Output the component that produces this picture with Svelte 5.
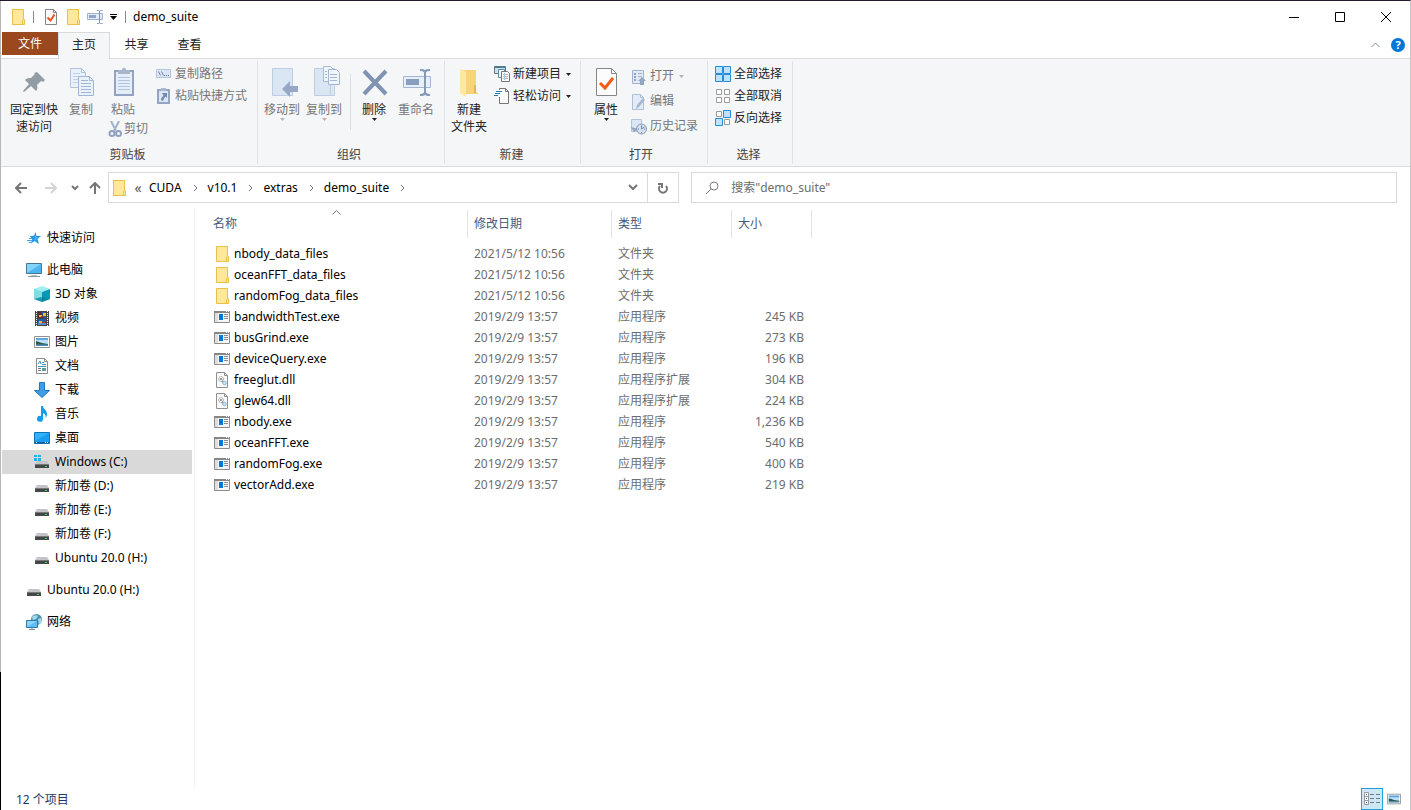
<script lang="ts">
  type Place = { name: string; icon: string; active?: boolean };
  type Entry = { name: string; icon: string; date: string; type: string; size?: string };

  const tabs = ['主页', '共享', '查看'];
  const crumbs = ['CUDA', 'v10.1', 'extras', 'demo_suite'];

  const places: { root: Place; children: Place[] }[] = [
    { root: { name: '快速访问', icon: 'star' }, children: [] },
    {
      root: { name: '此电脑', icon: 'pc' },
      children: [
        { name: '3D 对象', icon: 'cube' },
        { name: '视频', icon: 'video' },
        { name: '图片', icon: 'picture' },
        { name: '文档', icon: 'document' },
        { name: '下载', icon: 'download' },
        { name: '音乐', icon: 'music' },
        { name: '桌面', icon: 'desktop' },
        { name: 'Windows (C:)', icon: 'winDrive', active: true },
        { name: '新加卷 (D:)', icon: 'drive' },
        { name: '新加卷 (E:)', icon: 'drive' },
        { name: '新加卷 (F:)', icon: 'drive' },
        { name: 'Ubuntu 20.0 (H:)', icon: 'drive' },
      ],
    },
    { root: { name: 'Ubuntu 20.0 (H:)', icon: 'drive' }, children: [] },
    { root: { name: '网络', icon: 'network' }, children: [] },
  ];

  const folder = (name: string): Entry => ({ name, icon: 'folder', date: '2021/5/12 10:56', type: '文件夹' });
  const exe = (name: string, size: string): Entry => ({ name, icon: 'exe', date: '2019/2/9 13:57', type: '应用程序', size });
  const dll = (name: string, size: string): Entry => ({ name, icon: 'dll', date: '2019/2/9 13:57', type: '应用程序扩展', size });

  const files: Entry[] = [
    folder('nbody_data_files'),
    folder('oceanFFT_data_files'),
    folder('randomFog_data_files'),
    exe('bandwidthTest.exe', '245 KB'),
    exe('busGrind.exe', '273 KB'),
    exe('deviceQuery.exe', '196 KB'),
    dll('freeglut.dll', '304 KB'),
    dll('glew64.dll', '224 KB'),
    exe('nbody.exe', '1,236 KB'),
    exe('oceanFFT.exe', '540 KB'),
    exe('randomFog.exe', '400 KB'),
    exe('vectorAdd.exe', '219 KB'),
  ];

  let activeTab = $state('主页');
  let query = $state('');
</script>

{#snippet icon(name: string)}
  <svg class="i16" viewBox="0 0 16 16" aria-hidden="true">
    {#if name === 'folder'}
      <path d="M2 0h12v13h1v3H2z" fill="#ffe79b" />
      <path d="M2.5.5h11v10h1v5h-12z" fill="none" stroke="#e9c04c" />
      <path d="M12.5 11v4" stroke="#e9c04c" />
    {:else if name === 'check'}
      <path d="M2.5.5h8l3 3v12h-11z" fill="#fafafa" stroke="#868686" />
      <path d="M10.5.5v3h3" fill="none" stroke="#868686" />
      <path d="M4.5 8.5l3 3 4-6" fill="none" stroke="#e8541b" stroke-width="2" />
    {:else if name === 'rename'}
      <path d="M.5 4.5h15v6H.5z" fill="#e3ebf6" stroke="#9fb1cf" />
      <path d="M2 6h7v3H2z" fill="#91a4c5" />
      <path d="M10 1.500c1.500 0 2.500 0 2.500 1v11c0 1-1 1-2.500 1M15.500 1.500c-2 0-3 0-3 1v11c0 1 1 1 3 1" fill="none" stroke="#8193b3" />
    {:else if name === 'exe'}
      <path d="M.5 2.500h15v11H.5z" fill="#f6f6f6" stroke="#8a8c8f" />
      <path d="M0 2h16v2H0z" fill="#84878a" />
      <path d="M1 4h3v9H1z" fill="#dedede" />
      <path d="M12 2.500h1M14 2.500h1" stroke="#fff" />
      <path d="M5 5h4v6H5z" fill="#0078d7" />
      <path d="M10 5.500h4M10 7.500h4M10 9.500h4" stroke="#8c8c8c" />
    {:else if name === 'dll'}
      <path d="M2.500.5h8l3 3v12h-11z" fill="#fafafa" stroke="#909090" />
      <path d="M10.500.5v3h3" fill="none" stroke="#909090" />
      <circle cx="7" cy="7" r="2.500" fill="#e8e8e8" stroke="#a0a0a0" stroke-dasharray="1 .6" />
      <circle cx="7" cy="7" r="1" fill="#888" />
      <path d="M8 9l3 3" stroke="#8a9199" stroke-width="2" />
      <circle cx="10.500" cy="11" r="1.800" fill="#cfe8f8" stroke="#8bb8d8" />
    {:else if name === 'star'}
      <path d="M9.500 2l1 4H15l-3.500 3 1.500 5-4.500-3L5 13.500l1.300-4.700L3.500 6l4.500-.2z" fill="#2196e3" />
      <path d="M9.300 4.500l.7 2.500h2.500L10 8.500l.8 2.500-2.300-1.500z" fill="#51bbf5" />
      <path d="M3 8.500h4M1 10.500h5M3 12.500h3" stroke="#4a9fdb" />
    {:else if name === 'pc'}
      <path d="M.5 1.500h15v10H.5z" fill="#4cb5f2" stroke="#457590" />
      <path d="M1 2h14L1 11z" fill="#83d3fa" />
      <path d="M5 13h6v1H5z" fill="#b7c0c8" />
      <path d="M2 14.500h12" stroke="#8599a8" />
    {:else if name === 'cube'}
      <path d="M8 0l8 3-8 3-8-3z" fill="#a0edf2" />
      <path d="M0 3l8 3v10l-8-3z" fill="#3cc4d2" />
      <path d="M16 3L8 6v10l8-3z" fill="#0698b5" />
      <path d="M0 3l8 3v5l-8 2z" fill="#7fdde3" />
      <path d="M8 11l8 2-8 3-8-3z" fill="#087b95" opacity=".6" />
    {:else if name === 'video'}
      <path d="M1 1h14v15H1z" fill="#454545" />
      <path d="M2.500 1v15M13.500 1v15" stroke="#fff" stroke-dasharray="1 1" />
      <path d="M4 2h8v6H4zM4 9h8v6H4z" fill="#285ba8" />
      <path d="M4 2h3l3 6H4z" fill="#5a2c32" />
      <path d="M5 5h3v2H5zM9 3h3v3H9zM5 11h3v2H5z" fill="#f3bd25" />
      <path d="M7 6h3v1H7zM8 12h3v1H8z" fill="#bd3d31" />
      <path d="M4 14h8" stroke="#76c8ef" />
    {:else if name === 'picture'}
      <path d="M.5 2.500h15v11H.5z" fill="#fff" stroke="#909090" />
      <path d="M2 4h12v8H2z" fill="#b7e1f8" />
      <path d="M2 4h12v2H2z" fill="#63a5df" />
      <path d="M2 7l3 1 3 1 6 1v1H2z" fill="#31594b" />
      <path d="M2 10.500h12v1.500H2z" fill="#4d91b8" />
    {:else if name === 'document'}
      <path d="M2.500.5h8l3 3v12h-11z" fill="#fff" stroke="#8a8a8a" />
      <path d="M10.500.5v3h3" fill="none" stroke="#8a8a8a" />
      <path d="M4 6l2-3 1 3M8 4.500h2M8 6.500h4M4 8.500h8" stroke="#3f91c4" fill="none" />
      <path d="M4 10.500h3M4 12.500h3" stroke="#777" />
      <path d="M8 10h4v3H8z" fill="#5c9c9b" />
    {:else if name === 'download'}
      <path d="M5.500.5h5v8h5L8 15.500.5 8.500h5z" fill="#3c9de9" stroke="#2276bb" />
    {:else if name === 'music'}
      <path d="M7 0h2c0 3 4 4 4 8 0 1-.5 3-1.500 4 .5-3-.5-4-2.500-5v6a3 3 0 1 1-2-3z" fill="#139ce9" />
    {:else if name === 'desktop'}
      <path d="M.5 2.500h15v11H.5z" fill="#1a9cf0" stroke="#1073b4" />
      <path d="M1 3h14L1 11z" fill="#35b0fb" />
      <path d="M1 12.500h14" stroke="#075c95" />
      <path d="M2 12.500h1M11 12.500h1M13 12.500h1" stroke="#fff" />
    {:else if name === 'drive' || name === 'winDrive'}
      <path d="M3 7h10l2 3H1z" fill="#c2c5c9" />
      <path d="M1 10h14v4H1z" fill="#454749" />
      <path d="M1 10.500h14" stroke="#77797c" />
      <path d="M11 12h2v1h-2z" fill="#38e34a" />
      {#if name === 'winDrive'}
        <path d="M0 1h3v2H0zM4 1h3v2H4zM0 4h3v3H0zM4 4h3v3H4z" fill="#20b4ee" />
      {/if}
    {:else if name === 'network'}
      <circle cx="10.500" cy="5.500" r="5.500" fill="#4b94b7" />
      <path d="M6 3c2-2 5-2 6-1l-2 3-3 1zM12 5l3-1 1 4-3 2z" fill="#a6d9e6" />
      <path d="M.5 6.500h11v7H.5z" fill="#5bbdf3" stroke="#3279a5" />
      <path d="M1 7h10l-10 6z" fill="#89d4fa" />
      <path d="M3 15.500h6M6 14v1" stroke="#78909f" />
    {:else if name === 'copyPath'}
      <path d="M.5 3.500h14v8H.5z" fill="#dce6f4" stroke="#b4c4dd" />
      <path d="M2.500 5.500l2 4M5.500 5.500l2 4" stroke="#6f84aa" />
      <path d="M8 9.500h1M10 9.500h1M12 9.500h1" stroke="#5d739c" />
    {:else if name === 'pasteLink'}
      <path d="M2 2h11v13H2z" fill="#dbe6f5" stroke="#93a5c3" stroke-width="2" />
      <path d="M5 0h5v3H5z" fill="#aab8cf" />
      <path d="M6 5h5v5L9.500 8.500C8 10 7.500 11 7.500 12.500H5c0-2 1-3.500 2.500-5z" fill="#7288ae" />
    {:else if name === 'cut'}
      <path d="M4 0l5 10M12 0L7 10" stroke="#a4b2ca" stroke-width="2" />
      <circle cx="5" cy="12.500" r="2.500" fill="none" stroke="#8fa2c0" stroke-width="2" />
      <circle cx="11.500" cy="12.500" r="2.500" fill="none" stroke="#8fa2c0" stroke-width="2" />
    {:else if name === 'newItem'}
      <path d="M.5.5h11v7H.5z" fill="#c4e3f3" stroke="#55798c" />
      <path d="M1 1.500h11" stroke="#55798c" />
      <path d="M4.500 3.500h6v8h-6z" fill="#f8fbfd" stroke="#648aa1" />
      <path d="M7.500 5.500h6l2 2v8h-8z" fill="#fff" stroke="#777" />
      <path d="M9 8.500h5M9 10.500h5M9 12.500h5" stroke="#e5a3a3" />
      <path d="M10.500 7v7" stroke="#a6c9ef" />
    {:else if name === 'easyAccess'}
      <path d="M5 .5h6.500l3 3v12H5z" fill="#fafafa" />
      <path d="M5.500 2V.5h6l3 3v12h-9V9" fill="none" stroke="#777" />
      <path d="M11.500.5v3h3" fill="none" stroke="#777" />
      <path d="M2 3.500h6M1 5.500h5M0 7.500h4" stroke="#297cad" />
    {:else if name === 'open'}
      <path d="M1.500 1.500h11v13h-11z" fill="#e1eaf6" stroke="#a0b2d0" />
      <path d="M3 4h2v2H3zM3 7h2v2H3zM3 10h2v2H3z" fill="#8fa3c5" />
      <path d="M7 4.500h4M7 7.500h4" stroke="#9eb1cf" />
      <path d="M9 16v-4H7l4-4 4 4h-2v4z" fill="#92a5c4" />
    {:else if name === 'edit'}
      <path d="M1.500.5h8l3 3v12h-11z" fill="#e2ebf7" stroke="#afbfd8" />
      <path d="M9.500.5v3h3" fill="none" stroke="#afbfd8" />
      <path d="M5 15l1-4 6-7 2 2-6 7z" fill="#a8b7cf" />
    {:else if name === 'history'}
      <path d="M.5.5h10v12H.5z" fill="#dce7f5" stroke="#b4c4dd" />
      <circle cx="10.500" cy="10" r="5" fill="#d6e0ee" stroke="#8799b7" />
      <path d="M10.500 6.500V10l3-2M7 10h1M13 10h1M10.500 13v1" fill="none" stroke="#7489ad" />
      <path d="M0 8l3 5 4-3z" fill="#91a5c5" />
    {:else if name === 'selectAll'}
      <path d="M.5.5h7v7h-7zM8.500.5h7v7h-7zM.5 8.500h7v7h-7zM8.500 8.500h7v7h-7z" fill="#bfe1fb" stroke="#258dd7" />
    {:else if name === 'selectNone'}
      <path d="M1.500 1.500h5v5h-5zM9.500 1.500h5v5h-5zM1.500 9.500h5v5h-5zM9.500 9.500h5v5h-5z" fill="#fff" stroke="#9a9a9a" />
    {:else if name === 'invert'}
      <path d="M1.500 1.500h5v5h-5zM9.500 9.500h5v5h-5z" fill="#fff" stroke="#9a9a9a" />
      <path d="M8.500.5h7v7h-7zM.5 8.500h7v7h-7z" fill="#bfe1fb" stroke="#258dd7" />
    {:else if name === 'details'}
      <path d="M.5 1.500h4v4h-4zM.5 5.500h4v4h-4zM.5 9.500h4v4h-4z" fill="#fff" stroke="#999" />
      <path d="M2 3.500h1M2 7.500h1M2 11.500h1" stroke="#555" />
      <path d="M6 3.500h4M12 3.500h4M6 7.500h4M12 7.500h4M6 11.500h4M12 11.500h4" stroke="#6f7b80" />
    {/if}
  </svg>
{/snippet}

{#snippet bigIcon(name: string)}
  <svg class="i32" viewBox="0 0 32 32" aria-hidden="true">
    {#if name === 'pin'}
      <path d="M19 6l8 8-2 2-2-1-4 4c1 3 0 5-1 6l-5-5-7 6-1-1 6-7-4-4c2-2 4-2 6-2l4-4-1-1z" fill="#929ca5" />
    {:else if name === 'copy'}
      <path d="M5.500 2.500h11l4 4v15h-15z" fill="#eaf1fa" stroke="#b2c3de" />
      <path d="M16.500 2.500v4h4" fill="none" stroke="#b2c3de" />
      <path d="M8 7.500h7M8 10.500h8M8 13.500h8M8 16.500h8" stroke="#c1d0e6" />
      <path d="M13.500 10.500h11l4 4v15h-15z" fill="#eaf1fa" stroke="#a2b5d4" />
      <path d="M24.500 10.500v4h4" fill="none" stroke="#a2b5d4" />
      <path d="M16 14.500h7M16 17.500h10M16 20.500h10M16 23.500h10M16 26.500h10" stroke="#a2b5d4" />
    {:else if name === 'paste'}
      <path d="M8 5h18v24H8z" fill="#e4edf8" stroke="#93a4c2" stroke-width="2" />
      <path d="M11 4h4c0-3 4-3 4 0h4v4H11z" fill="#a9b5c9" />
      <path d="M11 11.500h12M11 14.500h12M11 17.500h12M11 20.500h12M11 23.500h12" stroke="#b4c5df" />
    {:else if name === 'moveTo'}
      <path d="M6.500 2.500h20v27h-20z" fill="#dbe6f5" stroke="#bdcde4" />
      <path d="M22.500 17v12" stroke="#bdcde4" />
      <path d="M16 23l8-8v5h8v6h-8v5z" fill="#97a8c6" />
    {:else if name === 'copyTo'}
      <path d="M6.500 2.500h20v27h-20z" fill="#dbe6f5" stroke="#bdcde4" />
      <path d="M22.500 17v12" stroke="#bdcde4" />
      <path d="M15.500.5h7l3 3v12h-10z" fill="#f0f5fb" stroke="#a9bbd7" />
      <path d="M20.500 3.500h8l3 3v12h-11z" fill="#f0f5fb" stroke="#a2b5d4" />
      <path d="M22 8.500h7M22 11.500h7M22 14.500h7M17 5.500h2M17 8.500h2M17 11.500h2" stroke="#a2b5d4" />
    {:else if name === 'delete'}
      <path d="M6 5l22 23M28 5L6 28" stroke="#8093b3" stroke-width="4" />
    {:else if name === 'rename'}
      <path d="M3.500 10.500h27v11h-27z" fill="#e7eff9" stroke="#a4b6d3" />
      <path d="M6 13h13v6H6z" fill="#8b9dbc" />
      <path d="M20 4c3 0 4 0 5 2 1-2 2-2 5-2M25 5v23M20 29c3 0 4 0 5-2 1 2 2 2 5 2" fill="none" stroke="#8799b8" stroke-width="2" />
    {:else if name === 'newFolder'}
      <path d="M7 4h16v22l2 1v1H13z" fill="#f7d477" />
      <path d="M7 3l6 3v25l-6-4z" fill="#ffe8a1" />
      <path d="M21 19h2v8h-2z" fill="#e5b74f" />
    {:else if name === 'properties'}
      <path d="M6.500 2.500h15l5 5v22h-20z" fill="#fcfcfc" stroke="#858585" />
      <path d="M21.500 2.500v5h5" fill="none" stroke="#858585" />
      <path d="M10 17l5 5 8-10" fill="none" stroke="#f35b1c" stroke-width="3" />
    {/if}
  </svg>
{/snippet}

{#snippet caret()}
  <svg class="caret" viewBox="0 0 5 3" aria-hidden="true"><path d="M0 0h5L2.500 3z" fill="currentColor" /></svg>
{/snippet}

{#snippet big(name: string, label: string, disabled = false, menu = false)}
  <button class="big" {disabled}>
    {@render bigIcon(name)}
    <span>{label}</span>
    {#if menu}{@render caret()}{/if}
  </button>
{/snippet}

{#snippet small(name: string, label: string, disabled = false, menu = false)}
  <button class="small" {disabled}>
    {@render icon(name)}
    <span>{label}</span>
    {#if menu}{@render caret()}{/if}
  </button>
{/snippet}

<div class="window">
  <header class="titlebar">
    <div class="quick">
      {@render icon('folder')}
      <i class="bar"></i>
      <button aria-label="属性">{@render icon('check')}</button>
      <button aria-label="新建文件夹">{@render icon('folder')}</button>
      <button aria-label="重命名">{@render icon('rename')}</button>
      <button class="customize" aria-label="自定义快速访问工具栏">
        <svg width="7" height="6" viewBox="0 0 7 6"><path d="M0 .5h7" stroke="#000" /><path d="M0 2h7L3.500 6z" /></svg>
      </button>
      <i class="bar"></i>
    </div>
    <h1>demo_suite</h1>
    <div class="controls">
      <button aria-label="最小化"><svg width="10" height="10"><path d="M0 5.500h10" stroke="#000" /></svg></button>
      <button aria-label="最大化"><svg width="10" height="10"><path d="M.5.5h9v9h-9z" fill="none" stroke="#000" /></svg></button>
      <button aria-label="关闭"><svg width="10" height="10"><path d="M0 0l10 10M10 0L0 10" stroke="#000" /></svg></button>
    </div>
  </header>

  <div class="tabs">
    <button class="file">文件</button>
    {#each tabs as tab}
      <button class="tab" class:active={tab === activeTab} onclick={() => (activeTab = tab)}>{tab}</button>
    {/each}
    <div class="help">
      <button aria-label="最小化功能区">
        <svg width="9" height="6"><path d="M.5 5l4-4 4 4" fill="none" stroke="#8c8c8c" /></svg>
      </button>
      <button class="question" aria-label="帮助">?</button>
    </div>
  </div>

  <div class="ribbon">
    <section class="group clipboard">
      <div class="tools">
        <div class="pin">{@render big('pin', '固定到快速访问')}</div>
        {@render big('copy', '复制', true)}
        <div class="paste">
          {@render big('paste', '粘贴', true)}
          {@render small('cut', '剪切', true)}
        </div>
        <div class="stack">
          {@render small('copyPath', '复制路径', true)}
          {@render small('pasteLink', '粘贴快捷方式', true)}
        </div>
      </div>
      <h2>剪贴板</h2>
    </section>
    <section class="group organize">
      <div class="tools">
        {@render big('moveTo', '移动到', true, true)}
        {@render big('copyTo', '复制到', true, true)}
        <i class="divider"></i>
        {@render big('delete', '删除', false, true)}
        {@render big('rename', '重命名', true)}
      </div>
      <h2>组织</h2>
    </section>
    <section class="group new">
      <div class="tools">
        {@render big('newFolder', '新建\n文件夹')}
        <div class="stack">
          {@render small('newItem', '新建项目', false, true)}
          {@render small('easyAccess', '轻松访问', false, true)}
        </div>
      </div>
      <h2>新建</h2>
    </section>
    <section class="group open">
      <div class="tools">
        {@render big('properties', '属性', false, true)}
        <div class="stack tall">
          {@render small('open', '打开', true, true)}
          {@render small('edit', '编辑', true)}
          {@render small('history', '历史记录', true)}
        </div>
      </div>
      <h2>打开</h2>
    </section>
    <section class="group select">
      <div class="tools">
        <div class="stack">
          {@render small('selectAll', '全部选择')}
          {@render small('selectNone', '全部取消')}
          {@render small('invert', '反向选择')}
        </div>
      </div>
      <h2>选择</h2>
    </section>
  </div>

  <div class="navbar">
    <div class="history">
      <button aria-label="返回"><svg width="12" height="12"><path d="M12 6H1M6 1L1 6l5 5" /></svg></button>
      <button aria-label="前进" disabled><svg width="12" height="12"><path d="M0 6h11M6 1l5 5-5 5" /></svg></button>
      <button class="recent" aria-label="最近浏览的位置"><svg width="8" height="6"><path d="M1 1l3 3 3-3" /></svg></button>
      <button class="up" aria-label="上移"><svg width="12" height="12"><path d="M6 12V1M1 6l5-5 5 5" /></svg></button>
    </div>
    <div class="boxes">
      <div class="address">
        {@render icon('folder')}
        <button class="more" aria-label="更多">«</button>
        {#each crumbs as crumb}
          <button class="crumb">{crumb}</button>
          <svg class="chevron" width="5" height="8"><path d="M1 1l3 3-3 3" /></svg>
        {/each}
        <button class="drop" aria-label="以前的位置"><svg width="10" height="7"><path d="M1 1l4 4 4-4" /></svg></button>
        <button class="refresh" aria-label="刷新">
          <svg width="12" height="12"><path d="M3 4a4 4 0 1 0 6 0M1 2h4v4" /></svg>
        </button>
      </div>
      <label class="search">
        <svg width="13" height="13"><circle cx="8" cy="5" r="4" /><path d="M5 8l-5 5" /></svg>
        <input type="text" aria-label="搜索" placeholder={'搜索"demo_suite"'} bind:value={query} />
      </label>
    </div>
  </div>

  <div class="content">
    <nav class="sidebar">
      {#each places as place}
        <div class="section">
          <a class="place" href="#top">{@render icon(place.root.icon)}<span>{place.root.name}</span></a>
          {#each place.children as child}
            <a class="place child" class:active={child.active} href="#top">{@render icon(child.icon)}<span>{child.name}</span></a>
          {/each}
        </div>
      {/each}
    </nav>
    <main>
      <table>
        <colgroup>
          <col class="c-name" /><col class="c-date" /><col class="c-type" /><col class="c-size" />
        </colgroup>
        <thead>
          <tr>
            <th aria-sort="ascending">
              名称
              <svg class="sort" width="9" height="5"><path d="M.5 4.500l4-4 4 4" fill="none" stroke="#777" /></svg>
            </th>
            <th>修改日期</th>
            <th>类型</th>
            <th>大小</th>
          </tr>
        </thead>
        <tbody>
          {#each files as file}
            <tr>
              <td><span class="name">{@render icon(file.icon)}{file.name}</span></td>
              <td>{file.date}</td>
              <td>{file.type}</td>
              <td class="size">{file.size ?? ''}</td>
            </tr>
          {/each}
        </tbody>
      </table>
    </main>
  </div>

  <footer class="status">
    <span>{files.length} 个项目</span>
    <div class="views">
      <button class="active" aria-label="详细信息">{@render icon('details')}</button>
      <button aria-label="大图标">{@render icon('picture')}</button>
    </div>
  </footer>
</div>

<style>
  :global(body) {
    margin: 0;
    background: #fff;
  }

  .window {
    display: flex;
    flex-direction: column;
    box-sizing: border-box;
    min-height: 100vh;
    padding-left: 1px;
    border-top: 1px solid #241b2b;
    border-right: 1px solid #c8c8c8;
    background: linear-gradient(#b8b8b8 83%, #000 83%) 0 0 / 1px 100% no-repeat #fff;
    color: #000;
    font: 12px/17px 'Noto Sans', 'Noto Sans CJK SC', sans-serif;
  }

  button {
    padding: 0;
    border: 0;
    background: none;
    color: inherit;
    font: inherit;
  }

  svg { display: block; flex: none; }
  .i16 { width: 16px; height: 16px; }
  .i32 { width: 32px; height: 32px; }
  .caret { width: 5px; height: 3px; }

  h1, h2 { margin: 0; font: inherit; }

  /* title bar */
  .titlebar {
    display: flex;
    align-items: center;
    height: 31px;
    padding-right: 1px;
    padding-left: 9px;
  }
  .quick { display: flex; align-items: center; gap: 6px; }
  .quick .bar { width: 1px; height: 12px; margin: 0 3px 0 1px; background: #8a8a8a; }
  .customize { margin: 0 1px; }
  .titlebar h1 { flex: 1; padding-left: 4px; }
  .controls { display: flex; }
  .controls button { display: grid; place-items: center; width: 46px; height: 31px; }

  /* tabs */
  .tabs {
    display: flex;
    height: 26px;
    padding-left: 1px;
    border-bottom: 1px solid #dadbdc;
  }
  .file { width: 56px; height: 23px; background: #9a481e; color: #fff; }
  .tab {
    box-sizing: border-box;
    width: 53px;
    height: 27px;
    padding-bottom: 3px;
    border: 1px solid transparent;
    border-bottom: 0;
    color: #222;
  }
  .tab.active { width: 52px; border-color: #dadbdc; background: #f5f6f7; }
  .help { display: flex; align-items: center; gap: 11px; margin-left: auto; padding-right: 5px; }
  .question {
    width: 14px;
    height: 14px;
    border-radius: 50%;
    background: #0078d7;
    color: #fff;
    font-weight: 700;
    font-size: 11px;
    line-height: 14px;
  }

  /* ribbon */
  .ribbon {
    display: flex;
    height: 107px;
    border-bottom: 1px solid #dadbdc;
    background: #f5f6f7;
    color: #222;
  }
  .group {
    display: flex;
    flex-direction: column;
    margin: 2px 0;
    padding-left: 3px;
    border-right: 1px solid #e2e3e4;
  }
  .tools { display: flex; align-items: flex-start; flex: 1; }
  .group h2 { padding-bottom: 1px; color: #444; text-align: center; }
  .clipboard { padding-right: 10px; padding-left: 7px; }
  .organize { padding-right: 7px; }
  .new { padding-right: 9px; }
  .new h2 { padding-left: 4px; }
  .open { padding-right: 9px; }
  .select { padding-right: 10px; padding-left: 7px; }

  .big {
    display: flex;
    flex-direction: column;
    align-items: center;
    width: 42px;
    padding-top: 5px;
    line-height: 17px;
    white-space: pre-line;
  }
  .big span { margin-top: 3px; }
  .pin .big { width: 52px; padding-right: 2px; padding-left: 2px; }
  .small {
    display: flex;
    align-items: center;
    gap: 3px;
    height: 22px;
    white-space: nowrap;
  }
  .small span, .place span { padding-bottom: 2px; }
  .small .caret { margin-left: 2px; }
  .big:disabled, .small:disabled { color: #777; }
  .big:disabled .caret, .small:disabled .caret { color: #b5b5b5; }
  .paste { width: 54px; }
  .paste .small { gap: 1px; margin-left: 5px; }
  .stack { padding-top: 2px; }
  .new .stack { padding-left: 4px; }
  .open .big { width: 44px; }
  .open .stack { padding-left: 3px; }
  .tall { padding-top: 3px; }
  .tall .small { height: 25px; }
  .divider { width: 1px; height: 56px; margin: 13px 2px 0 5px; background: #dcddde; }

  /* address bar */
  .navbar { display: flex; padding: 5px 13px 5px 8px; }
  .navbar svg:not(.i16) { fill: none; stroke: #757575; stroke-width: 2; }
  .history { display: flex; align-items: center; }
  .history button { display: grid; place-items: center; width: 24px; height: 31px; margin-right: 6px; }
  .history button:disabled { opacity: 0.3; }
  .history .recent { width: 12px; margin: 0; }
  .history .up { width: 28px; margin: 0 -1px 0 0; }
  .boxes { display: grid; flex: 1; grid-template-columns: 17fr 21fr; gap: 12px; }
  .address, .search {
    display: flex;
    align-items: center;
    box-sizing: border-box;
    height: 31px;
    border: 1px solid #d9d9d9;
  }
  .address { padding-left: 2px; }
  .more { width: 22px; color: #555; font-size: 14px; }
  .address .chevron { margin: 0 10px 0 11px; }
  .navbar .address .chevron { stroke-width: 1; }
  .drop { display: grid; place-items: center; width: 29px; height: 29px; margin-left: auto; }
  .refresh { display: grid; place-items: center; width: 31px; height: 29px; border-left: 1px solid #d9d9d9; }
  .search { gap: 12px; padding: 0 14px; }
  .navbar .search svg { stroke: #808080; stroke-width: 1; }
  .search input {
    flex: 1;
    min-width: 0;
    padding: 0;
    border: 0;
    outline: 0;
    background: none;
    font: inherit;
  }
  .search input::placeholder { color: #6d6d6d; opacity: 1; }

  /* navigation pane */
  .content { display: flex; flex: 1; }
  .sidebar {
    display: flex;
    flex-direction: column;
    gap: 8px;
    box-sizing: border-box;
    width: 194px;
    padding: 18px 2px 0 1px;
    border-right: 1px solid #f3f3f3;
  }
  .place {
    display: flex;
    align-items: center;
    gap: 5px;
    height: 24px;
    padding-left: 24px;
    color: #000;
    text-decoration: none;
  }
  .child { padding-left: 32px; }
  .place.active { background: #d9d9d9; }

  /* file list */
  main { flex: 1; padding-left: 11px; }
  table { width: 606px; border-collapse: collapse; table-layout: fixed; }
  .c-name { width: 262px; }
  .c-date { width: 144px; }
  .c-type { width: 120px; }
  .c-size { width: 80px; }
  th {
    position: relative;
    height: 26px;
    padding: 0 6px 2px;
    background: linear-gradient(#e5e5e5, #e5e5e5) right / 1px 100% no-repeat;
    color: #43597a;
    font-weight: 400;
    text-align: left;
  }
  th:first-child { padding-left: 7px; }
  .sort { position: absolute; top: 0; left: 48%; }
  thead { border-top: 2px solid transparent; border-bottom: 5px solid transparent; }
  td { height: 21px; padding: 0 8px 0 6px; color: #6d6d6d; white-space: nowrap; }
  .name { display: flex; align-items: center; gap: 4px; padding-left: 2px; color: #000; }
  .size { text-align: right; }

  /* status bar */
  .status { display: flex; align-items: center; justify-content: space-between; height: 22px; padding-left: 15px; color: #1f3765; }
  .views { display: flex; padding-right: 5px; }
  .views button { display: grid; place-items: center; width: 22px; height: 22px; }
  .views .active { box-sizing: border-box; border: 1px solid #26a0da; background: #cce8f6; }
  .views .i16 { width: 14px; }
  .views .active .i16 { width: 16px; }
</style>
